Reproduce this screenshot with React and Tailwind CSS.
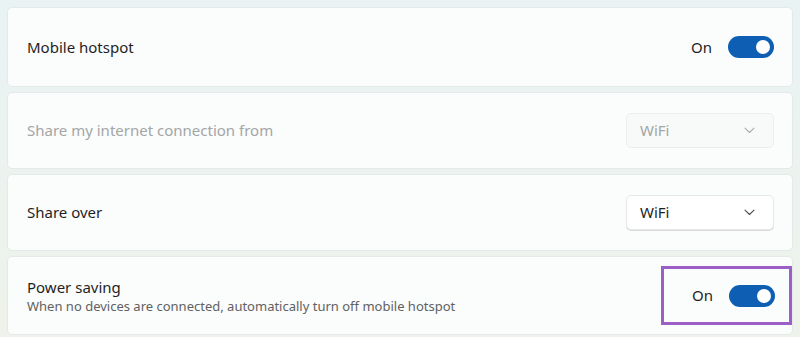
import React from "react";

function Toggle() {
  return (
    <div className="flex items-center gap-[16px]">
      <span className="text-[15px] text-[#1f1f1f]">On</span>
      <div className="w-[46px] h-[22px] rounded-full bg-[#0e5fb3] flex items-center justify-end pr-[4px]">
        <div className="w-[14px] h-[14px] rounded-full bg-white" />
      </div>
    </div>
  );
}

function Dropdown({ disabled }) {
  return (
    <div
      className={
        "w-[148px] h-[35px] rounded-[5px] border flex items-center justify-between pl-[13px] pr-[18px] " +
        (disabled
          ? "bg-[#f8faf9] border-[#eceeed] text-[#a3a6a6]"
          : "bg-white border-[#e6e8e8] text-[#1f1f1f] shadow-[0_1px_0_#dcdede]")
      }
    >
      <span className="text-[15px]">WiFi</span>
      <svg width="11" height="7" viewBox="0 0 11 7" fill="none">
        <path
          d="M1 1.2 L5.5 5.5 L10 1.2"
          stroke={disabled ? "#a9acac" : "#4a4d4d"}
          strokeWidth="1.1"
          strokeLinecap="round"
          strokeLinejoin="round"
        />
      </svg>
    </div>
  );
}

function Card({ children, className = "" }) {
  return (
    <div
      className={
        "mx-[7px] rounded-[5px] bg-[#fbfcfc] border border-[#e4eaea] flex items-center justify-between pl-[19px] " +
        className
      }
    >
      {children}
    </div>
  );
}

export default function App() {
  return (
    <div
      className="w-[800px] h-[337px] bg-gradient-to-b from-[#e9f3f4] to-[#eef2ea] pt-[7px] flex flex-col gap-[5px] overflow-hidden"
      style={{ fontFamily: '"Noto Sans", "Open Sans", sans-serif' }}
    >
      <Card className="h-[80px] pr-[18px]">
        <span className="text-[15px] text-[#1f1f1f]">Mobile hotspot</span>
        <Toggle />
      </Card>
      <Card className="h-[77px] pr-[18px]">
        <span className="text-[15px] text-[#a3a6a6]">Share my internet connection from</span>
        <Dropdown disabled />
      </Card>
      <Card className="h-[77px] pr-[18px]">
        <span className="text-[15px] text-[#1f1f1f]">Share over</span>
        <Dropdown />
      </Card>
      <Card className="h-[79px] pr-0">
        <div className="flex flex-col pt-[1px]">
          <span className="text-[15px] leading-[20px] text-[#1f1f1f]">Power saving</span>
          <span className="text-[13px] leading-[18px] text-[#5f6262]">
            When no devices are connected, automatically turn off mobile hotspot
          </span>
        </div>
        <div className="w-[131px] h-[59px] border-[3px] border-[#9b5fc6] flex items-center justify-end pr-[14px]">
          <Toggle />
        </div>
      </Card>
    </div>
  );
}
